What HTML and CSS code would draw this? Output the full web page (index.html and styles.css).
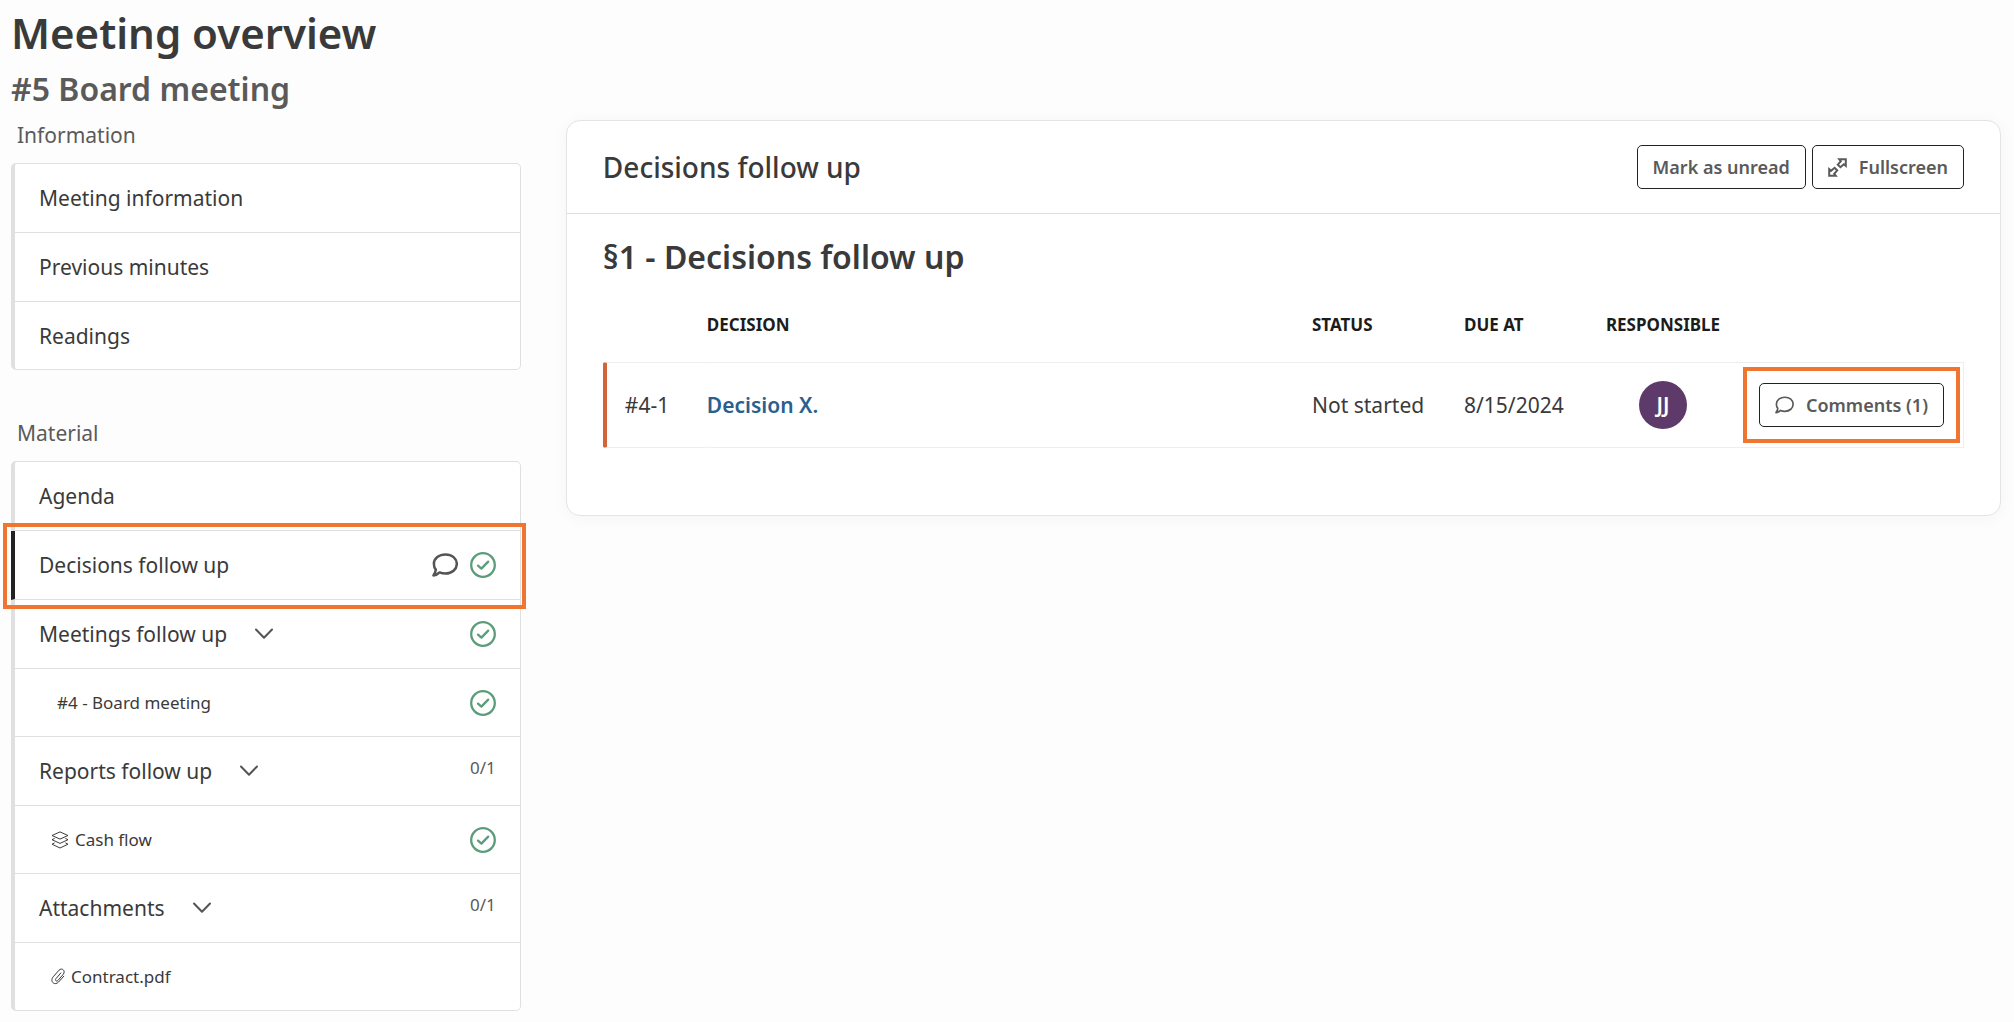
FILE: index.html
```
<!DOCTYPE html>
<html lang="en">
<head>
	<meta charset="utf-8">
	<title>Meeting overview</title>
	<link rel="stylesheet" href="styles.css">
</head>
<body>
	<!-- shared icons -->
	<svg class="sprite" aria-hidden="true">
		<symbol id="check" viewBox="0 0 26 26">
			<circle cx="13" cy="13" r="11.8" stroke-width="2.3" />
			<path d="M8 13.6 L11.4 16.6 L18.2 9.6" stroke-width="2.3" stroke-linecap="round" stroke-linejoin="round" />
		</symbol>
		<symbol id="comment" viewBox="0 0 26 24">
			<path d="M13.5 1.4 C20 1.4 24.8 5.4 24.8 10.9 C24.8 16.4 20 20.6 13.5 20.6 C11.3 20.6 9.4 20.2 7.6 19.4 C6 21.1 3.8 22.2 1.4 22.4 C2.9 20.4 3.7 18.5 3.8 16.6 C2.5 15 1.9 13.1 1.9 10.9 C1.9 5.4 7 1.4 13.5 1.4 Z" stroke-linejoin="round" />
		</symbol>
		<symbol id="chevron" viewBox="0 0 18 12">
			<path d="M1 1.5 L9 9.8 L17 1.5" stroke-width="2" stroke-linecap="round" stroke-linejoin="round" />
		</symbol>
		<symbol id="layers" viewBox="0 0 18 18">
			<path d="M9 0.9 L17 4.5 L9 8.1 L1 4.5 Z" />
			<path d="M3.6 7.4 L1 8.7 L9 12.4 L17 8.7 L14.4 7.4" />
			<path d="M3.6 11.9 L1 13.2 L9 17 L17 13.2 L14.4 11.9" />
		</symbol>
		<symbol id="clip" viewBox="0 0 14 17">
			<path d="M9.8 5 L5 10.6 C3.6 12.4 5.6 14 7 12.4 L12.2 6.4 C15 2.8 11 -0.8 8 2.2 L2.2 8.8 C-1.6 13.4 3.6 18.2 7.6 14 L12.8 8.2" stroke-linecap="round" />
		</symbol>
		<symbol id="expand" viewBox="0 0 19 19">
			<path d="M11.2 1.2 H17.8 V7.8 L15.8 6.2 L12.4 9.2 L9.8 6.6 L12.8 3.2 Z" />
			<path d="M7.8 17.8 H1.2 V11.2 L3.2 12.8 L6.6 9.8 L9.2 12.4 L6.2 15.8 Z" />
		</symbol>
	</svg>

	<h1 class="title">Meeting overview</h1>
	<h2 class="subtitle">#5 Board meeting</h2>

	<div class="layout">
		<nav class="sidebar">
			<h3 class="list-title">Information</h3>
			<ul class="list">
				<li class="item"><a href="#">Meeting information</a></li>
				<li class="item"><a href="#">Previous minutes</a></li>
				<li class="item"><a href="#">Readings</a></li>
			</ul>

			<h3 class="list-title">Material</h3>
			<ul class="list">
				<li class="item"><a href="#">Agenda</a></li>
				<li class="item active">
					<a href="#">Decisions follow up</a>
					<svg class="icon-comment"><use href="#comment" /></svg>
					<svg class="icon-check"><use href="#check" /></svg>
				</li>
				<li class="item">
					<a href="#">Meetings follow up <svg class="icon-chevron"><use href="#chevron" /></svg></a>
					<svg class="icon-check"><use href="#check" /></svg>
				</li>
				<li class="item sub indent">
					<a href="#">#4 - Board meeting</a>
					<svg class="icon-check"><use href="#check" /></svg>
				</li>
				<li class="item">
					<a href="#">Reports follow up <svg class="icon-chevron"><use href="#chevron" /></svg></a>
					<span class="count">0/1</span>
				</li>
				<li class="item sub">
					<a href="#"><svg class="icon-layers"><use href="#layers" /></svg>Cash flow</a>
					<svg class="icon-check"><use href="#check" /></svg>
				</li>
				<li class="item">
					<a href="#">Attachments <svg class="icon-chevron"><use href="#chevron" /></svg></a>
					<span class="count">0/1</span>
				</li>
				<li class="item sub">
					<a href="#"><svg class="icon-clip"><use href="#clip" /></svg>Contract.pdf</a>
				</li>
			</ul>
		</nav>

		<main class="card">
			<div class="card-head">
				<h2 class="card-title">Decisions follow up</h2>
				<div class="buttons">
					<button class="btn" type="button">Mark as unread</button>
					<button class="btn" type="button"><svg class="icon-expand"><use href="#expand" /></svg>Fullscreen</button>
				</div>
			</div>
			<div class="card-body">
				<h2 class="section-title">§1 - Decisions follow up</h2>
				<table class="decisions">
					<thead>
						<tr>
							<th class="col-id"></th>
							<th>Decision</th>
							<th class="col-status">Status</th>
							<th class="col-due">Due at</th>
							<th class="col-resp">Responsible</th>
							<th class="col-comments"></th>
						</tr>
					</thead>
					<tbody>
						<tr>
							<td class="col-id">#4-1</td>
							<td><a class="decision-link" href="#">Decision X.</a></td>
							<td>Not started</td>
							<td>8/15/2024</td>
							<td class="col-resp"><span class="avatar">JJ</span></td>
							<td class="col-comments">
								<span class="marked">
									<button class="btn" type="button"><svg class="icon-bubble"><use href="#comment" /></svg>Comments (1)</button>
								</span>
							</td>
						</tr>
					</tbody>
				</table>
			</div>
		</main>
	</div>
</body>
</html>
```
FILE: styles.css
```
* {
	box-sizing: border-box;
}
body {
	margin: 0;
	padding: 7px 13px 11px 11px;
	background-color: #fdfdfd;
	color: #3a3a3a;
	font-family: "Noto Sans", sans-serif;
	font-size: 21px;
	line-height: 28px;
}
h1, h2, h3, ul {
	margin: 0;
	padding: 0;
}
a {
	color: inherit;
	text-decoration: none;
}
svg {
	flex: none;
	fill: none;
	stroke: currentColor;
}
.sprite {
	position: absolute;
	width: 0;
	height: 0;
}

.title {
	font-size: 42px;
	line-height: 52px;
	font-weight: 600;
}
.subtitle {
	margin-top: 8px;
	color: #5a5a5a;
	font-size: 32px;
	line-height: 44px;
	font-weight: 600;
}
.layout {
	display: grid;
	grid-template-columns: 27fr 76fr;
	gap: 45px;
	align-items: start;
	padding-top: 9px;
}

/* left menu */
.list-title {
	padding: 1px 0 14px 6px;
	color: #5a5a5a;
	font-size: 21px;
	font-weight: 400;
}
.list {
	margin-bottom: 48px;
	border: 1px solid #e0e0e0;
	border-left-width: 4px;
	border-radius: 5px;
	background-color: #fff;
	list-style: none;
}
.list:last-child {
	margin-bottom: 0;
}
.item {
	display: flex;
	align-items: center;
	gap: 12px;
	height: 69px;
	padding: 0 24px;
	border-bottom: 1px solid #e0e0e0;
}
.item a {
	display: flex;
	align-items: center;
	margin-right: auto;
}
.sub {
	height: 68px;
	padding-left: 36px;
	font-size: 17px;
}
.item:last-child {
	height: 67px;
	border-bottom: 0;
}
.indent {
	padding-left: 42px;
}
.active {
	position: relative;
	margin-left: -4px;
	border-left: 4px solid #222;
}
.count {
	padding-bottom: 6px;
	color: #5a5a5a;
	font-size: 17px;
}

/* orange frames */
.active::after, .marked::after {
	content: "";
	position: absolute;
	border: 4px solid #f07530;
	pointer-events: none;
}
.active::after {
	inset: -8px -6px -10px -12px;
}
.marked::after {
	inset: -16px;
}

.icon-check {
	width: 26px;
	height: 26px;
	color: #5c9c7b;
}
.icon-comment {
	width: 26px;
	height: 24px;
	color: #555;
	stroke-width: 2.5;
}
.icon-chevron {
	width: 18px;
	height: 12px;
	margin-left: 28px;
	color: #555;
}
.icon-layers {
	width: 18px;
	height: 18px;
	margin-right: 6px;
}
.icon-clip {
	width: 14px;
	height: 17px;
	margin-right: 6px;
}
.icon-expand {
	width: 19px;
	height: 19px;
	stroke-width: 2;
}
.icon-bubble {
	width: 19px;
	height: 18px;
	stroke-width: 2.3;
}

/* card */
.card {
	margin-top: 0;
	border: 1px solid #e4e4e4;
	border-radius: 14px;
	background-color: #fff;
	box-shadow: 0 2px 18px rgba(0, 0, 0, 0.04);
}
.card-head {
	display: flex;
	align-items: center;
	justify-content: space-between;
	padding: 24px 36px;
	border-bottom: 1px solid #e0e0e0;
}
.card-title {
	font-size: 28px;
	line-height: 44px;
	font-weight: 500;
}
.buttons {
	display: flex;
	gap: 6px;
}
.btn {
	display: flex;
	align-items: center;
	gap: 12px;
	height: 44px;
	padding: 0 15px;
	border: 1px solid #222;
	border-radius: 5px;
	background-color: #fff;
	color: #5a5a5a;
	font-family: inherit;
	font-size: 18px;
	font-weight: 600;
	white-space: nowrap;
	cursor: pointer;
}
.card-body {
	padding: 21px 36px 67px;
}
.section-title {
	font-size: 32px;
	line-height: 44px;
	font-weight: 600;
}

.decisions {
	width: 100%;
	margin-top: 5px;
	border-spacing: 0;
	table-layout: fixed;
}
.decisions th {
	height: 78px;
	padding: 3px 0 0;
	color: #1c1c1c;
	font-size: 17px;
	font-weight: 700;
	text-align: left;
	text-transform: uppercase;
}
.decisions td {
	height: 86px;
	padding: 0;
	border-top: 1px solid #eee;
	border-bottom: 1px solid #eee;
}
.decisions .col-id {
	width: 104px;
}
.decisions td.col-id {
	padding-left: 18px;
	border-left: 4px solid #d2653a;
	border-radius: 2px;
}
.col-status {
	width: 152px;
}
.col-due {
	width: 139px;
}
.decisions .col-resp {
	width: 120px;
	text-align: center;
}
.decisions .col-comments {
	width: 241px;
}
.decisions td.col-comments {
	padding-left: 36px;
	border-right: 1px solid #eee;
}
.decision-link {
	color: #2a5f8e;
	font-weight: 600;
}
.avatar {
	display: block;
	width: 48px;
	margin: 0 auto;
	border-radius: 50%;
	background-color: #5d3a6a;
	color: #fff;
	font-size: 21px;
	line-height: 48px;
	font-weight: 600;
}
.marked {
	display: inline-block;
	position: relative;
	vertical-align: middle;
}
```
